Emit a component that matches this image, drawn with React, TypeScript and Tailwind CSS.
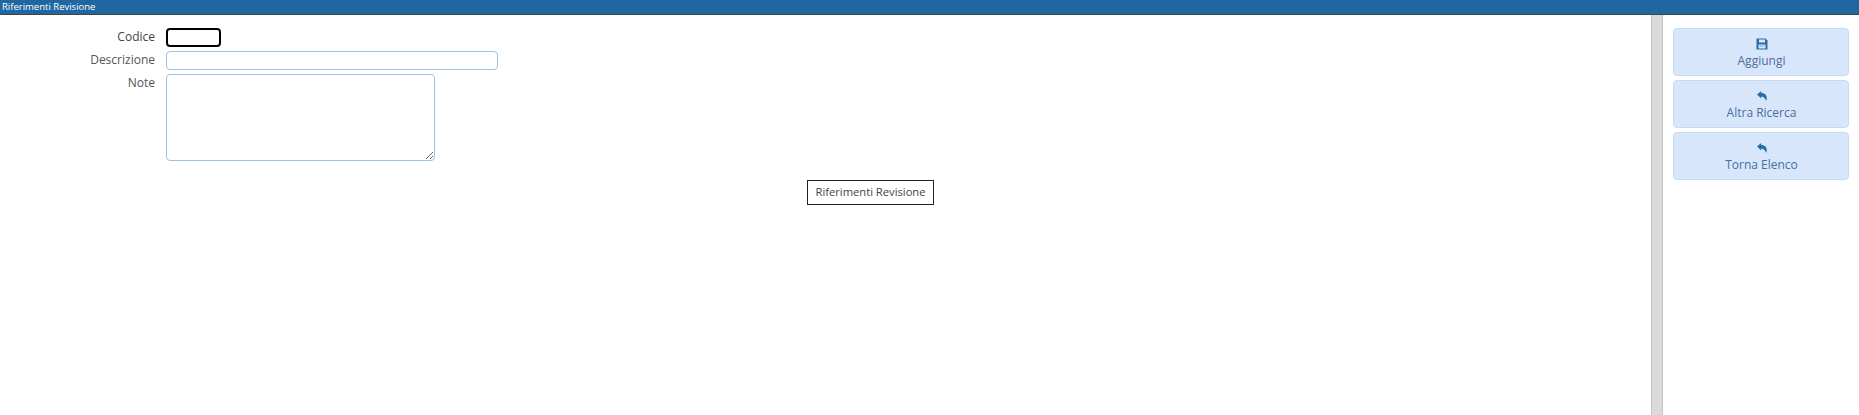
const SaveIcon = () => (
    <svg width="12" height="12" viewBox="0 0 12 12" fill="none">
        <path d="M0.5 0.5H9.5L11.5 2.5V11.5H0.5Z" fill="#2b6ca6" />
        <rect x="3" y="1.5" width="6" height="3" fill="#d8e6fc" />
        <rect x="2.5" y="6.5" width="7" height="4" fill="#d8e6fc" />
        <rect x="3.5" y="7.5" width="5" height="1" fill="#8fb2d6" />
    </svg>
);

const ReplyIcon = () => (
    <svg width="10" height="10" viewBox="0 0 10 10">
        <path d="M0 3.6L4.2 0V2C7.6 2.1 9.8 3.9 9.8 7C9.8 8 9.5 9 9 10C8.6 7.6 7 5.6 4.2 5.4V7.4Z" fill="#2b6ca6" />
    </svg>
);

const actions = [
    { label: 'Aggiungi', icon: <SaveIcon /> },
    { label: 'Altra Ricerca', icon: <ReplyIcon /> },
    { label: 'Torna Elenco', icon: <ReplyIcon /> },
];

export default function App() {
    return (
        <div className="flex h-[415px] flex-col overflow-hidden bg-white font-['Open_Sans',sans-serif] text-[12px]">
            <div className="h-[15px] shrink-0 border-b border-[#444] bg-[#2067a2] pl-[2px] text-[9.5px] leading-[14px] text-white">
                Riferimenti Revisione
            </div>

            <div className="flex min-h-0 flex-1">
                <div className="min-w-0 flex-1 pt-[13px]">
                    <div className="grid grid-cols-[155px_1fr] gap-x-[11px] gap-y-[4px]">
                        <label className="text-right leading-[18px] text-[#444]">Codice</label>
                        <input type="text" className="h-[19px] w-[55px] rounded-[4px] border-2 border-black bg-white outline-none" />

                        <label className="text-right leading-[18px] text-[#555]">Descrizione</label>
                        <input type="text" className="h-[19px] w-[332px] rounded-[4px] border border-[#9cc3e4] bg-white outline-none" />

                        <label className="text-right leading-[18px] text-[#555]">Note</label>
                        <textarea className="block h-[87px] w-[269px] rounded-[4px] border border-[#9cc3e4] bg-white outline-none" />
                    </div>

                    <div className="mt-[19px] flex justify-center pl-[90px]">
                        <div className="flex h-[25px] w-[127px] items-center justify-center border border-[#222] text-[11.2px] text-[#444]">
                            Riferimenti Revisione
                        </div>
                    </div>
                </div>

                <div className="w-[12px] shrink-0 border-x border-[#c4c4c4] bg-[#dadada]" />

                <div className="flex w-[196px] shrink-0 flex-col gap-[4px] pt-[13px] pl-[10px] pr-[10px]">
                    {actions.map((a) => (
                        <button
                            key={a.label}
                            className="flex h-[48px] w-[176px] flex-col items-center justify-center rounded-[4px] border border-[#c5daf0] bg-[#d8e6fc] pt-[2px] pl-[1px] text-[12px] leading-[17px] text-[#4a6f9c]"
                        >
                            <span className="mb-[2px] flex h-[13px] items-center">{a.icon}</span>
                            <span>{a.label}</span>
                        </button>
                    ))}
                </div>
            </div>
        </div>
    );
}
